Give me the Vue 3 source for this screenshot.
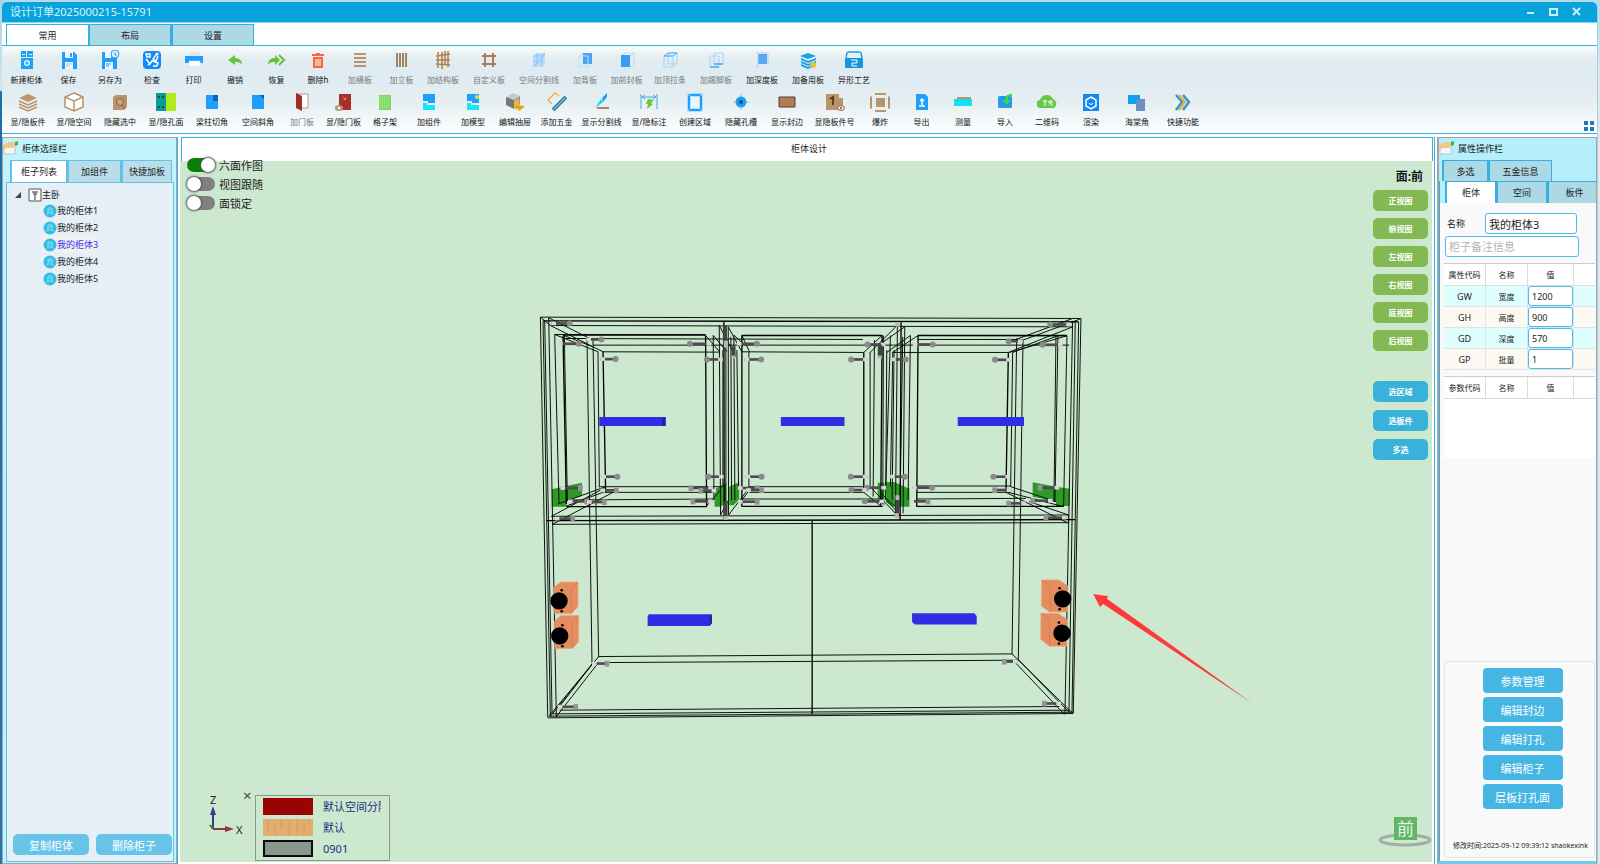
<script setup>
import { ref } from 'vue'

const ribbonTabs = ['常用', '布局', '设置']

const ribbonRows = [
  [
    { t: '新建柜体', i: '<path fill="#1aa3f5" d="M4 1h5v6H4zM10 1h6v6h-6zM4 8h12v11H4z"/><path fill="#e8f6ff" d="M5 4h3v1H5zM12 4h3v1h-3z"/><circle cx="10" cy="13" r="3" fill="#e8f6ff"/><path stroke="#1aa3f5" d="M10 11v4M8 13h4"/>' },
    { t: '保存', i: '<path fill="#1e9fff" d="M3 2h12l3 3v14H3z"/><path fill="#eef6fb" d="M6 2h8v6H6zM6 12h8v7H6z"/><path fill="#1e9fff" d="M11 3h2v4h-2z"/><path stroke="#bbb" d="M7 14h6M7 16h4"/>' },
    { t: '另存为', i: '<path fill="#1e9fff" d="M2 2h12l3 3v14H2z"/><path fill="#eef6fb" d="M5 2h6v6H5zM5 12h8v7H5z"/><circle cx="15" cy="4" r="4" fill="#dff1ff" stroke="#1e9fff"/><path stroke="#1e9fff" d="M15 2v3h2M6 14h5M6 16h3"/>' },
    { t: '检查', i: '<rect x="1" y="1" width="18" height="18" rx="4" fill="#0f8cf5"/><path fill="none" stroke="#fff" stroke-width="1.500" d="M4 4h4v3H5zM14 5l-3 4 3 2 2-5M4 9l4 5M6 15l2-1 2-3 6 2-1 3M11 16h4"/><circle cx="15" cy="4" r="1.500" fill="#fff"/>' },
    { t: '打印', i: '<path fill="#e3e5e7" d="M5 2h11v5H5z"/><path fill="#1e9fff" d="M1 6h18v7H1z"/><path fill="#fff" stroke="#dde" stroke-width=".5" d="M5 11h11v5H5z"/>' },
    { t: '撤销', i: '<path fill="#67c23a" d="M3 10l7-5v3c5 0 7 3 7 7-2-3-4-3-7-3v3z"/>' },
    { t: '恢复', i: '<path fill="#67c23a" d="M13 10L8 5v3c-5 0-7 3-7 7 2-3 4-3 7-3v3z"/><path fill="none" stroke="#67c23a" stroke-width="2" d="M12 5l5 5-5 5"/>' },
    { t: '删除h', i: '<path fill="#f5693a" d="M8 3h4v1h4v2H4V4h4zM5 7h10v11H5z"/><path stroke="#fff" d="M8 9v7M10 9v7M12 9v7"/>' },
    { t: '加横板', off: 1, i: '<path stroke="#b8946a" stroke-width="2" d="M4 4h12M4 8h12M4 12h12M4 16h12"/>' },
    { t: '加立板', off: 1, i: '<path stroke="#a08468" stroke-width="2" d="M5 3v14M8 3v14M11 3v14M14 3v14"/>' },
    { t: '加结构板', off: 1, i: '<path stroke="#b08050" stroke-width="1.500" d="M5 2v16M9 2v17M15 1v16M3 6l14-2M3 10h14M3 14l14 1M12 1v14"/>' },
    { t: '自定义板', off: 1, i: '<path stroke="#a88058" stroke-width="2" d="M6 3v14M14 3v14M3 6h14M3 14h14"/>' },
    { t: '空间分割线', off: 1, i: '<path fill="#b9dcfa" d="M4 6l4-3h8v11l-3 3H4z"/><path fill="none" stroke="#8cc4f5" d="M4 6h9v11M13 6l3-3M4 17L16 4M4 11h9M8 3v11"/>' },
    { t: '加背板', off: 1, i: '<path fill="#4aa3f2" d="M8 3h9v11H8z"/><path fill="none" stroke="#bfe0fb" d="M4 6h9v11H4zM4 6l4-3"/>' },
    { t: '加前封板', off: 1, i: '<path fill="none" stroke="#bfd9f2" d="M8 3h9v11l-4 3M4 6l4-3M13 6l4-3"/><path fill="#3a9df5" d="M4 5h9v12H4z"/>' },
    { t: '加顶拉条', off: 1, i: '<path fill="none" stroke="#a5d2f8" d="M8 3h9v11H8zM4 6h9v11H4z"/><path stroke="#4aa8f5" d="M4 6h9l4-3H8z" fill="none"/>' },
    { t: '加踢脚板', off: 1, i: '<path fill="none" stroke="#a5d2f8" d="M8 3h9v11H8zM4 6h9v11H4z"/><path stroke="#4aa8f5" stroke-width="1.500" d="M4 17h9M8 14h9"/>' },
    { t: '加深度板', i: '<path fill="#5ba7ee" d="M6 4h9v10H6z"/><path fill="none" stroke="#a9d3f8" d="M4 3h12M4 17h2V4M16 3v12"/>' },
    { t: '加备用板', i: '<path fill="#16a0ee" d="M10 3l8 3-8 3-8-3zM3 8l7 3 8-3v2l-8 3-7-3zM3 11l7 3 8-3v2l-8 3-7-3zM3 14l7 3 4-2v2l-4 2-7-3z"/><circle cx="15" cy="15" r="3" fill="#e8c03c"/>' },
    { t: '异形工艺', i: '<path fill="none" stroke="#1e9fe0" stroke-width="1.500" d="M2 8l1-5q0-1 2-1h10q2 0 2 1l1 5"/><rect x="1" y="8" width="18" height="10" rx="1" fill="#1496dd"/><path fill="none" stroke="#fff" d="M7 10h6v3H8v3h5"/>' }
  ],
  [
    { t: '显/隐板件', i: '<path fill="#c09868" d="M10 2l9 4-9 4-9-4z"/><path fill="none" stroke="#b8946a" stroke-width="1.500" d="M1 9l9 4 9-4M1 12l9 4 9-4M1 15l9 4 9-4"/>' },
    { t: '显/隐空间', i: '<path fill="#fff" stroke="#b8946a" stroke-width="1.500" d="M10 1l9 4v10l-9 4-9-4V5z"/><path fill="none" stroke="#b8946a" stroke-width="1.500" d="M1 5l9 4 9-4M10 9v10"/>' },
    { t: '隐藏选中', i: '<path fill="#b8946a" d="M3 5l3-2h11v12l-3 3H3z"/><circle cx="10" cy="10" r="3.500" fill="#c8a678" stroke="#8a6238"/><path stroke="#8a6238" d="M12 13l3 4"/>' },
    { t: '显/隐孔面', i: '<path fill="#0b9c96" d="M0 1h10v18H0z"/><path fill="#b3ea1c" d="M10 1h10v18H10z"/><path stroke="#064a4a" stroke-width="2" d="M3 4v2M3 14v2M7 4v2M7 14v2"/>' },
    { t: '梁柱切角', i: '<path fill="#1e9fff" d="M4 3h12v14H4z"/><path fill="#0668b8" d="M11 3h5v6h-5z"/>' },
    { t: '空间斜角', i: '<path fill="#1e9fff" d="M4 3h7l5 5v9H4z"/><path fill="#0668b8" d="M11 3h5v5z"/>' },
    { t: '加门板', off: 1, i: '<path fill="#fff" stroke="#c89088" d="M5 2h11v14H5z"/><path fill="#a02c24" d="M4 1l6 3v15l-6-3z"/>' },
    { t: '显/隐门板', i: '<path fill="#a83028" d="M5 2h12v16H5z"/><path stroke="#d8847c" d="M9 5l3 3M13 5l-3 3"/><ellipse cx="5" cy="16" rx="4" ry="3" fill="#b09070"/><circle cx="5" cy="16" r="1.500" fill="#eee"/>' },
    { t: '格子架', i: '<path fill="#7fd860" d="M4 3h12v15H4z"/><path stroke="#b4efa0" stroke-dasharray="1 1" d="M5 5h10M5 7h10M5 9h10M5 11h10M5 13h10M5 15h10"/>' },
    { t: '加组件', i: '<path fill="#1e9fff" d="M4 2h12v9H9V9H4z"/><path fill="#12e8f8" d="M4 11h4v2h8v5H4z"/>' },
    { t: '加模型', i: '<path fill="#1e9fff" d="M4 2h12v9H9V9H4z"/><path fill="#12e8f8" d="M4 11h4v2h8v5H4z"/><circle cx="14" cy="5" r="2" fill="#d8e838"/>' },
    { t: '编辑抽屉', i: '<path fill="#c8c8c8" d="M1 5l7-4 7 3-6 4z"/><path fill="#777" d="M1 5l8 3v9l-8-4z"/><path fill="#999" d="M9 8l6-4v9l-6 4z"/><path fill="#f0b82c" d="M9 9l5-2v5l5 3-4 4-6-3z"/><path stroke="#c8850c" fill="none" d="M10 14l5 2 4-2"/>' },
    { t: '添加五金', i: '<path fill="none" stroke="#f0b83c" stroke-width="1.500" d="M5 12l-4-4 7-7 4 3"/><path stroke="#3c88a8" stroke-width="4" d="M6 18L19 5"/><path stroke="#a0c8d8" d="M7 17L18 6"/>' },
    { t: '显示分割线', i: '<path fill="#1e9fff" d="M10 6l5-5v4l-4 5z"/><path fill="#18d8f0" d="M9 7l2 3-8 6z"/><path stroke="#b08060" stroke-width="2" d="M5 16h12"/>' },
    { t: '显/隐标注', i: '<path stroke="#40a8e0" fill="none" d="M2 2v15M18 2v15M3 5h14M6 3L3 5l3 2M14 3l3 2-3 2"/><path fill="#68c840" d="M9 7l6 1-3 3 2 1-6 5 1-5H7z"/>' },
    { t: '创建区域', i: '<rect x="4" y="3" width="12" height="15" fill="#e8f7ff" stroke="#1e9fff" stroke-width="2.500"/><path stroke="#8ee0ff" d="M3 2l3 3M17 2l-3 3M3 19l3-3M17 19l-3-3"/>' },
    { t: '隐藏孔槽', i: '<path stroke="#8adcf5" stroke-width="1.500" d="M10 2v16M2 10h16"/><circle cx="10" cy="10" r="5.500" fill="#1e9fe8"/><circle cx="10" cy="10" r="2" fill="#0a4888"/>' },
    { t: '显示封边', i: '<path fill="#b87858" stroke="#443" d="M2 5h16v10H2z"/>' },
    { t: '显隐板件号', i: '<path fill="#b8946a" d="M1 2h13v16H1zM14 6h4v10h-4z"/><path fill="none" stroke="#3a2a18" stroke-width="1.500" d="M5 7l3-2v8"/><ellipse cx="16" cy="16" rx="3.500" ry="2.500" fill="#f0e8dc" stroke="#8a6a48"/><circle cx="16" cy="16" r="1" fill="#6a4a28"/>' },
    { t: '爆炸', i: '<path fill="#b8946a" d="M6 6h9v9H6zM5 1h11v2H5zM5 18h11v2H5zM0 5l2-1v13l-2-1zM20 5l-2-1v13l2-1z"/>' },
    { t: '导出', i: '<path fill="#1e9fff" d="M4 2h9l3 3v13H4z"/><path stroke="#fff" stroke-width="1.500" fill="none" d="M10 13V7M8 9l2-2 2 2M7 14h6"/>' },
    { t: '测量', i: '<path fill="#b8946a" d="M4 5h14v5H4z"/><path fill="#12e4f4" d="M1 7h18v7H1z"/><path stroke="#0cc8dc" d="M4 7v3M7 7v2M10 7v3M13 7v2M16 7v3"/>' },
    { t: '导入', i: '<rect x="3" y="4" width="14" height="12" rx="1.500" fill="#2898e8"/><path fill="#38d850" d="M17 2c-5 0-7 2-7 6H7l5 5 4-5h-3c0-3 1-4 4-4z"/>' },
    { t: '二维码', i: '<path fill="#68c848" d="M4 16a4 4 0 01-1-8 7 7 0 0113-1 5 5 0 011 9z"/><path stroke="#fff" fill="none" d="M8 14V8M6 10l2-2 2 2M12 9h3v2h-3zM12 13h1M14 13h2"/>' },
    { t: '渲染', i: '<path fill="#0f88f8" d="M2 2h16v17H2z"/><path fill="none" stroke="#fff" stroke-width="1.500" d="M10 5l5 3v6l-5 3-5-3V8z"/><path fill="none" stroke="#fff" d="M8 11c1 2 3 2 4 0"/>' },
    { t: '海棠角', i: '<path fill="#12a0e8" d="M1 3h12v9H1z"/><path fill="#6890c0" d="M9 9l3-2h6v12H9z"/>' },
    { t: '快捷功能', i: '<path fill="none" stroke="#2c98dc" stroke-width="2.500" d="M3 3l6 7-6 8M10 3l6 7-6 8"/><path fill="none" stroke="#f0b030" stroke-width="2.500" d="M6 3l6 7-6 8"/>' }
  ]
]

const cabinets = ['我的柜体1', '我的柜体2', '我的柜体3', '我的柜体4', '我的柜体5']
const selected = ref('我的柜体3')
const name = ref('我的柜体3')
const toggles = ref([
  { t: '六面作图', on: true },
  { t: '视图跟随', on: false },
  { t: '面锁定', on: false }
])
const views = ['正视图', '俯视图', '左视图', '右视图', '底视图', '后视图']
const picks = ['选区域', '选板件', '多选']
const attrs = ref([
  { c: 'GW', n: '宽度', v: '1200' },
  { c: 'GH', n: '高度', v: '900' },
  { c: 'GD', n: '深度', v: '570' },
  { c: 'GP', n: '批量', v: '1' }
])
const actions = ['参数管理', '编辑封边', '编辑打孔', '编辑柜子', '层板打孔面']

// Edges of the cabinet, in thirds of a screen pixel
const thin = [
  'M32 51L54 1253M40 62L62 1250M45 62L67 1242M57 53L80 1253M32 51L1655 55M62 76L1630 80M32 51L62 76M57 53L190 120',
  'M1655 55L1632 1240M1648 65L1628 1240M1638 60L1619 1238M1630 62L1607 1243M1655 55L1630 66',
  'M90 1231L1590 1220M70 1242L1620 1231M60 1249L1632 1237M55 1254L1632 1241',
  'M207 1070L1448 1062M240 1088L1465 1081M57 1250L207 1070M80 1250L205 1090M85 1226L190 1090M62 1250L192 1086',
  'M1448 1062L1630 1240M1468 1080L1620 1238M1455 1085L1605 1243',
  'M172 115L187 1090M190 122L207 1072M1462 115L1448 1063M1481 120L1467 1080',
  'M65 649L1618 645M68 673L1618 668M65 649L228 562M68 673L250 577M85 612L228 560M110 618L225 575',
  'M62 76L220 155M75 103L205 155M100 105L190 140M75 103H528M100 115L1000 118M190 135L1620 135M220 155L570 156',
  'M75 103L88 612M104 107L113 600M205 155L209 562M551 106L553 600M113 600L555 597M209 560H580M225 577H550',
  'M569 76L573 645M596 80L597 645M580 150V560M589 80V640M604 110L606 600M613 105L616 600M622 150L627 560M658 155V560',
  'M528 106L570 155M551 106L592 155M569 76L618 170M596 80L637 155M637 106L660 155M613 105L640 130M531 618L573 570M573 645L597 600M597 645L660 562M637 600L660 570',
  'M637 106H1058M637 155L1003 157M658 560H1003M660 577H1003M637 597H1055',
  'M1022 156V562M1035 120L1031 590M1062 106L1060 612M1083 106L1068 600M1072 150L1069 560M1090 155L1083 560M1104 75L1098 645M1126 80L1121 640M1143 106L1136 600M1094 150L1088 600M1120 110L1112 600',
  'M1058 106L1003 157M1104 75L1022 157M1126 80L1055 130M1143 106L1072 157M1166 106L1090 157M1003 577L1054 618M1022 560L1098 640M1070 600L1112 645M1054 580L1098 620',
  'M1166 118H1480M1166 106L1613 107M1090 157H1437M1450 157L1444 560M1586 107L1577 605M1613 107L1603 618M1580 107L1574 605',
  'M1162 597L1490 595M1162 577H1430M1162 558H1444M1630 55L1460 118M1630 80L1437 157M1586 107L1450 157M1613 107L1440 157M1630 65L1481 120',
  'M1430 575L1603 620M1444 560L1580 605M1430 577L1618 670M1500 605L1618 645M1618 645V668'
].join('')
const bold = [
  'M40 62L1648 65M50 662L1637 659M583 62L584 660M1115 65L1112 660M848 662V1243',
  'M100 107L110 612M528 106L531 620M220 155L228 577M637 106V620M1003 157V577M1058 106L1054 618M1166 106L1162 620M1437 157L1430 575',
  'M100 105H528M110 620H531M637 619H1060M1162 619H1603M637 106H1058M1166 106H1613'
].join('')

// [x, y, length, direction]
const pins = [
  [65, 70, 55, 1], [170, 118, 45, 1], [85, 131, 62, 1], [212, 177, 46, 1], [215, 530, 48, 1],
  [545, 131, 64, -1], [580, 178, 48, -1], [582, 530, 46, -1], [622, 131, 60, 1], [645, 178, 50, 1], [648, 530, 48, 1],
  [92, 564, 60, 1], [115, 604, 56, 1], [172, 606, 52, 1], [212, 571, 48, 1], [75, 656, 54, 1],
  [550, 564, 66, -1], [550, 604, 60, -1], [560, 572, 46, -1], [625, 564, 58, 1], [625, 605, 58, 1], [650, 570, 46, 1],
  [1068, 133, 54, -1], [1015, 178, 50, -1], [1085, 178, 44, 1], [1150, 133, 60, 1],
  [1445, 179, 48, -1], [1600, 134, 60, -1], [1480, 123, 42, -1], [1625, 73, 62, -1],
  [1014, 530, 50, -1], [1082, 530, 44, 1], [1442, 530, 50, -1],
  [1070, 563, 58, -1], [1064, 604, 58, -1], [1012, 570, 46, -1], [1148, 563, 60, 1], [1140, 604, 56, 1],
  [1446, 570, 50, -1], [1590, 563, 58, -1], [1570, 602, 60, -1], [1490, 610, 52, -1], [1612, 653, 62, -1],
  [187, 1091, 45, 1], [84, 1221, 54, 1], [1465, 1085, 40, -1], [1595, 1211, 50, -1]
]
const speakers = [
  { p: 'M72 862L94 846H145V920L126 941H74Z', e: 'M124 866L145 847M124 866L126 940', x: 88, y: 903, h: 96 },
  { p: 'M74 964L94 947H147V1026L128 1046H76Z', e: 'M126 966L147 948M126 966L128 1045', x: 90, y: 1008, h: 98 },
  { p: 'M1537 840H1588L1615 857V936H1560L1536 918Z', e: 'M1537 841L1562 858L1563 935', x: 1600, y: 897, h: 1591 },
  { p: 'M1535 940H1586L1613 958V1039H1560L1534 1018Z', e: 'M1535 941L1560 958L1561 1038', x: 1598, y: 1000, h: 1589 }
]
</script>

<template>
  <div class="desktop">
    <div class="window">
      <header class="titlebar">
        <h1>设计订单2025000215-15791</h1>
        <div class="winbtns">
          <button aria-label="最小化"><svg width="10" height="10"><path d="M1 6h7" /></svg></button>
          <button aria-label="最大化"><svg width="10" height="10"><path d="M1 2h7v6H1z" /></svg></button>
          <button aria-label="关闭"><svg width="10" height="10"><path d="M1 1l7 7M8 1L1 8" /></svg></button>
        </div>
      </header>

      <nav class="tabs menu">
        <button v-for="(t, k) in ribbonTabs" :key="t" :class="{ active: k === 0 }">{{ t }}</button>
      </nav>

      <section class="ribbon">
        <div v-for="(row, r) in ribbonRows" :key="r" class="tools" :class="'tools-' + r">
          <button v-for="b in row" :key="b.t" :disabled="!!b.off">
            <svg viewBox="0 0 20 20" v-html="b.i" />
            <span>{{ b.t }}</span>
          </button>
        </div>
        <button class="grid-btn" aria-label="布局"><svg width="10" height="10"><path fill="#2577b3" d="M0 0h4v4H0zM6 0h4v4H6zM0 6h4v4H0zM6 6h4v4H6z" /></svg></button>
      </section>

      <main>
        <aside class="panel left">
          <h2>
            <svg width="16" height="16" viewBox="0 0 16 16"><path fill="#f4f8fa" stroke="#b8c8d0" d="M1 7h11v7H1z" /><path fill="#eec98a" d="M0 5l6-3 6 0 2 3-6 3-4 0-4 2z" /><path fill="#38b838" d="M12 2l3-1v4l-3 1z" /></svg>
            柜体选择栏
          </h2>
          <nav class="tabs">
            <button class="active">柜子列表</button><button>加组件</button><button>快捷加板</button>
          </nav>
          <div class="pane">
            <div class="root">
              <svg class="caret" width="6" height="6"><path fill="#444" d="M6 0v6H0z" /></svg>
              <svg width="14" height="14" viewBox="0 0 14 14"><path fill="#fff" stroke="#555" d="M1 1h12v12H1z" /><path fill="none" stroke="#777" d="M4 4h6M5 6h4M7 4v8" stroke-width="1.500" /></svg>
              主卧
            </div>
            <ul>
              <li v-for="c in cabinets" :key="c">
                <button :class="{ sel: c === selected }" @click="selected = c">
                  <svg width="14" height="14" viewBox="0 0 14 14"><circle cx="7" cy="7" r="6.500" fill="#32bce6" /><path fill="none" stroke="#8adcf2" d="M5 4h4v5H5zM5 6h4M3 11l2-2M11 11L9 9" /></svg>{{ c }}
                </button>
              </li>
            </ul>
            <div class="foot"><button>复制柜体</button><button>删除柜子</button></div>
          </div>
        </aside>

        <section class="center">
          <h2>柜体设计</h2>
          <div class="canvas">
            <svg class="scene" viewBox="-1050 -417 3759 2103" role="img" aria-label="柜体三维视图">
              <path fill="#2e9a26" d="M66 568L110 558L157 548V588L110 602V620H66ZM555 568L590 548V610L572 620H555ZM599 560L629 546V598L612 616H599ZM1045 548H1065V618L1045 596ZM1070 546H1094L1140 566V620H1090L1070 606ZM1510 547L1580 560L1621 566V618H1580V604L1510 590Z" />
              <path class="edge" :d="thin" />
              <path class="edge strong" :d="bold" />
              <g fill="#2e2ee4">
                <path d="M209 351H408V378H209ZM754 351H945V378H754ZM1285 351H1484V378H1285Z" />
                <path d="M358 943H547V970L541 978H354V949ZM1148 940H1335L1342 948V974H1156L1148 966Z" />
              </g>
              <path fill="#23239c" d="M397 353h11v24h-11zM540 945l7 0v24l-7 7z" />
              <g v-for="(p, k) in pins" :key="k">
                <path :d="`M${p[0]} ${p[1]}h${p[2] * p[3]}`" stroke="#4c4c4c" stroke-width="8" />
                <path :d="`M${p[0]} ${p[1]}h${14 * p[3]}`" stroke="#ddd5dd" stroke-width="11" />
                <rect v-if="k > 10 && k < 22 || k > 36" :x="p[0] + p[2] * p[3] - 7" :y="p[1] - 8" width="14" height="17" fill="#969096" />
                <circle v-else :cx="p[0] + p[2] * p[3]" :cy="p[1]" r="9" fill="#8c888c" />
              </g>
              <path stroke="#444" stroke-width="12" d="M586 75v44M588 605v42M612 138v32M1051 133v36M1104 600v40" />
              <path stroke="#bbb4bb" stroke-width="12" d="M589 122v20M588 648v12M612 166v10M1051 166v10M1104 68v12M1104 586v14M1102 640v14" />
              <g v-for="s in speakers" :key="s.y">
                <path :d="s.p" fill="#e58d5e" stroke="#f2a478" stroke-width="2" />
                <path :d="s.e" fill="none" stroke="#c87850" stroke-width="2" />
                <circle :cx="s.x" :cy="s.y" r="26" /><circle :cx="s.h" :cy="s.y - 32" r="4" /><circle :cx="s.h" :cy="s.y + 31" r="4" />
              </g>
              <path fill="#ff3838" d="M1692 882L1737 889L1732 896L2170 1211L1722 912L1712 921Z" />
            </svg>

            <div class="toggles">
              <label v-for="t in toggles" :key="t.t"><input v-model="t.on" type="checkbox">{{ t.t }}</label>
            </div>

            <div class="viewbar">
              <strong>面:前</strong>
              <div class="group"><button v-for="v in views" :key="v">{{ v }}</button></div>
              <div class="group pick"><button v-for="v in picks" :key="v">{{ v }}</button></div>
            </div>

            <svg class="axis" width="50" height="50" viewBox="0 0 50 50">
              <path stroke="#3a3a8c" stroke-width="2" d="M16 36V18" /><path fill="#3a3a8c" d="M13 22L16 13L19 22Z" />
              <path stroke="#8c3a3a" stroke-width="2" d="M16 36H30" /><path fill="#8c3a3a" d="M28 33L37 36L28 39Z" />
              <path stroke="#2f8040" fill="none" stroke-width="2" d="M13 32L16 36" />
              <text x="13" y="11">Z</text><text x="39" y="41">X</text>
            </svg>

            <div class="legend">
              <button aria-label="关闭图例">×</button>
              <ul>
                <li>
                  <svg width="50" height="17"><path fill="#9c0404" d="M0 0h50v17H0z" /><path stroke="#7c0808" fill="none" d="M3 4l8 3M14 10l9-3M27 4l9 4M31 13l12-4M8 14l7-2" /></svg>
                  <span>默认空间分隔</span>
                </li>
                <li>
                  <svg width="50" height="17"><path fill="#e2ad70" d="M0 0h50v17H0z" /><path stroke="#d49c5c" d="M5 0v12M12 3v14M18 0v9M26 2v15M34 0v14M41 4v13M46 0v8" /></svg>
                  <span>默认</span>
                </li>
                <li>
                  <svg width="50" height="17"><path fill="#8a978c" stroke="#0c0c0c" stroke-width="2" d="M1 1h48v15H1z" /></svg>
                  <span>0901</span>
                </li>
              </ul>
            </div>

            <svg class="compass" width="54" height="32" viewBox="0 0 54 32">
              <ellipse cx="27" cy="24" rx="25" ry="5" fill="none" stroke="#a4aca5" stroke-width="3" />
              <path fill="#62b466" d="M16 1h23v23H16z" /><text x="19" y="19">前</text>
            </svg>
          </div>
        </section>

        <aside class="panel right">
          <h2>
            <svg width="16" height="16" viewBox="0 0 16 16"><path fill="#f4f8fa" stroke="#b8c8d0" d="M1 7h11v7H1z" /><path fill="#eec98a" d="M0 5l6-3 6 0 2 3-6 3-4 0-4 2z" /><path fill="#38b838" d="M12 2l3-1v4l-3 1z" /></svg>
            属性操作栏
          </h2>
          <nav class="tabs upper"><button>多选</button><button>五金信息</button></nav>
          <nav class="tabs lower"><button class="active">柜体</button><button>空间</button><button>板件</button></nav>
          <div class="pane">
            <div class="field"><label for="cab-name">名称</label><input id="cab-name" v-model="name"></div>
            <input class="remark" placeholder="柜子备注信息" aria-label="柜子备注信息">
            <table>
              <thead><tr><th>属性代码</th><th>名称</th><th>值</th><th></th></tr></thead>
              <tbody>
                <tr v-for="a in attrs" :key="a.c">
                  <td class="code">{{ a.c }}</td><td>{{ a.n }}</td><td class="val"><input v-model="a.v" :aria-label="a.n"></td><td></td>
                </tr>
              </tbody>
            </table>
            <div class="params">
              <table><thead><tr><th>参数代码</th><th>名称</th><th>值</th><th></th></tr></thead></table>
            </div>
            <div class="actions">
              <button v-for="a in actions" :key="a">{{ a }}</button>
              <p>修改时间:2025-09-12 09:39:12 shaokexink</p>
            </div>
          </div>
        </aside>
      </main>
    </div>
  </div>
</template>

<style>
body { margin: 0; }
</style>

<style scoped>
* { box-sizing: border-box; }
.desktop {
  min-height: 100vh;
  display: flex;
  padding: 2px 2px 0;
  background: linear-gradient(#a9d5e6 0, #c3dfec 60px, #dde3e8 90px, #1f6ea8 92px, #2474ac 100%) left / 4px 100% no-repeat, linear-gradient(#b5dae8, #e4e6e8 80px);
  font-family: "Noto Sans", "Noto Sans CJK SC", sans-serif;
  font-size: 9px;
  color: #222;
}
h1, h2, ul, p { margin: 0; padding: 0; font-weight: 400; list-style: none; }
button, input { font: inherit; color: inherit; margin: 0; }
button { border: 0; background: none; padding: 0; white-space: nowrap; cursor: pointer; }
svg { display: block; flex: none; }

.window {
  flex: 1;
  min-width: 0;
  display: flex;
  flex-direction: column;
  background: #fff;
  border-right: 1px solid #9bd3ea;
  border-radius: 5px 5px 0 0;
}
.titlebar {
  height: 21px;
  display: flex;
  align-items: center;
  justify-content: space-between;
  padding: 0 15px 0 8px;
  background: #09a3dc;
  border-bottom: 1px solid #8fd4ee;
  border-radius: 5px 5px 0 0;
  color: #d9f3fc;
}
h1 { font-size: 11px; line-height: 20px; }
.winbtns { display: flex; gap: 13px; }
.winbtns svg { fill: none; stroke: #c9effb; stroke-width: 2; }

.tabs { display: flex; }
.tabs button {
  flex: none;
  height: 22px;
  border: 1px solid #35b0df;
  border-left-width: 2px;
  border-bottom: 0;
  background: #add8e6;
}
.tabs .active { background: #fff; }
.menu { padding: 1px 0 0 4px; }
.menu button { width: 83px; height: 21px; }
.menu .active { width: 82px; height: 22px; margin-bottom: -1px; position: relative; border-left-width: 1px; border-right: 0; }

.ribbon {
  position: relative;
  display: flex;
  flex-direction: column;
  gap: 6px;
  padding: 4px 0 5px 3px;
  border: 1px solid #35b0df;
  border-width: 1px 0;
  background: linear-gradient(#fafcfc 0, #e4edf0 12px, #deebf2 24px, #e5eef1 55px, #fdfeff 100%);
}
.tools { display: grid; height: 36px; }
.tools-0 { grid-template-columns: 43px 41px 42px 42px 41px 42px 41px 42px 42px 41px 42px 50px 50px 42px 41px repeat(5, 46px); }
.tools-1 { grid-template-columns: repeat(6, 46px) 42px 41px 42px 46px 42px 42px 41px 49px repeat(4, 46px) 49px 42px 41px 42px 42px 42px repeat(3, 46px); }
.tools button { display: flex; flex-direction: column; align-items: center; gap: 4px; font-size: 8px; line-height: 12px; color: #111; }
.tools button:disabled { color: #777; }
.tools svg { width: 20px; height: 20px; fill: none; }
.grid-btn { position: absolute; right: 3px; bottom: 2px; }

main { flex: 1; display: flex; min-height: 0; padding-top: 3px; }
.panel {
  flex: none;
  display: flex;
  flex-direction: column;
  border: 1px solid #a4a4a4;
  overflow: hidden;
}
.panel h2 { height: 22px; display: flex; align-items: center; gap: 3px; padding-bottom: 1px; font-size: 9px; }
.panel h2 svg { align-self: flex-start; margin-top: 2px; }
.left { width: 175px; background: #c2f3fc; }
.left .tabs { padding-left: 7px; }
.left .tabs button { border-color: #5fc3e8; background: #b9dde9; width: 54px; }
.left .tabs button:first-child { width: 57px; background: #fff; }
.left .tabs button:last-child { width: 51px; }
.pane { flex: 1; display: flex; flex-direction: column; }
.left .pane { margin: 0 2px 1px 3px; border: 1px solid #5bc3ea; background: #e6eef6; padding-top: 3px; }
.root { display: flex; align-items: center; height: 17px; padding-left: 8px; }
.caret { margin-right: 7px; }
.left ul { margin-top: -1px; }
.left li { height: 17px; padding-left: 35px; }
.left li button { display: flex; align-items: center; height: 17px; padding: 0 1px 0 1px; }
.left li .sel { background: #f0f0f0; color: #3c2cf0; }
.foot { margin-top: auto; display: flex; gap: 7px; padding: 0 1px 6px 6px; }
.foot button { flex: 1; height: 21px; border-radius: 5px; background: #67c3e8; color: #fff; font-size: 11px; }

.center { flex: 1; min-width: 0; display: flex; flex-direction: column; margin-right: 2px; border: 1px solid #35b0df; border-width: 0 1px; padding: 0 2px 2px; }
.center h2 { height: 24px; line-height: 21px; font-size: 9px; text-align: center; border: 1px solid #35b0df; border-bottom: 0; margin: 0 -1px 0 1px; padding-left: 4px; }
.canvas { position: relative; flex: 1; min-height: 600px; background: #cce8cf; }
.scene { position: absolute; inset: 0; width: 100%; height: 100%; }
.edge { fill: none; stroke: #0c120e; stroke-width: 3; }
.strong { stroke: #000; stroke-width: 4; }

.toggles { position: absolute; left: 7px; top: -6px; }
.toggles label { display: flex; align-items: center; gap: 4px; height: 19px; font-size: 11px; }
.toggles input {
  appearance: none;
  width: 28px;
  height: 14px;
  border-radius: 7px;
  background: #808080;
  display: flex;
}
.toggles input::before { content: ""; width: 14px; height: 14px; border-radius: 50%; background: #fff; box-shadow: 0 0 2px 1px #555; }
.toggles input:checked { background: #0a800a; justify-content: flex-end; }

.viewbar { position: absolute; right: 4px; top: 7px; display: flex; flex-direction: column; align-items: flex-end; }
.viewbar strong { font-size: 12px; line-height: 18px; margin: 0 5px 4px 0; color: #111; }
.group { display: flex; flex-direction: column; gap: 7px; }
.group button { width: 55px; height: 21px; border-radius: 5px; background: #83b953; color: #fff; font-size: 8px; font-weight: 700; }
.pick { margin-top: 30px; gap: 8px; }
.pick button { background: #38b2db; }

.axis { position: absolute; left: 17px; bottom: 19px; font-size: 11px; fill: #222; }
.legend { position: absolute; left: 75px; bottom: 1px; width: 135px; height: 66px; border: 1px solid #8a968e; padding: 2px 8px 0 7px; }
.legend button { position: absolute; left: -13px; top: -9px; font-size: 15px; line-height: 16px; color: #444; }
.legend ul { display: flex; flex-direction: column; gap: 4px; }
.legend li { display: flex; gap: 10px; height: 17px; line-height: 17px; font-size: 11px; color: #1c2f7c; }
.legend span { width: 58px; overflow: hidden; white-space: nowrap; }
.compass { position: absolute; right: 0; bottom: 14px; font-size: 17px; fill: #e8f5e8; }

.right { width: 160px; background: #b5effb; border-left-width: 2px; border-bottom: 3px solid #6fcbea; }
.right .upper { padding-left: 3px; }
.right .upper button { width: 46px; height: 21px; }
.right .upper button:last-child { width: 64px; }
.right .lower { padding-left: 6px; background: linear-gradient(#35b0df, #35b0df) left / 1px no-repeat; }
.right .lower button { width: 51px; }
.right .lower button:last-child { width: 54px; }
.right .pane { border-left: 1px solid #35b0df; background: #f9f9f9; padding: 10px 1px 3px 4px; }
.field { display: flex; align-items: center; gap: 20px; padding-left: 3px; }
.field input, .remark, .val input { border: 1px solid #4fbae3; border-radius: 3px; background: #fff; outline: 0; padding: 0 3px; min-width: 0; }
.field input { width: 92px; height: 21px; font-size: 11px; }
.remark { width: 134px; height: 21px; margin: 2px 0 6px 1px; font-size: 11px; }
.remark::placeholder { color: #b4b4b4; }
table { width: 100%; table-layout: fixed; border-collapse: separate; border-spacing: 0; font-size: 8px; background: #fff; border-top: 1px solid #ccc; }
th, td { padding: 0; height: 21px; font-weight: 400; text-align: center; border-right: 1px solid #dde4ee; border-bottom: 1px solid #dde4ee; }
th { height: 22px; border-color: #ddd; width: 42px; }
th:nth-child(3) { width: 46px; }
th:last-child { width: auto; }
th:last-child, td:last-child { border-right: 0; }
tbody tr { background: #dffffe; }
tbody tr:nth-child(even) { background: #fbf9f2; }
.code { font-size: 9px; }
.val input { display: block; width: 45px; height: 20px; font-size: 9px; }
.params { height: 82px; margin-top: 6px; background: #fff; }
.actions { margin-top: auto; height: 197px; border: 1px solid #dfe8ee; border-radius: 3px; display: flex; flex-direction: column; align-items: center; gap: 4px; padding: 6px 0 0 6px; }
.actions button { width: 80px; height: 25px; flex: none; border-radius: 4px; background: #45b6e3; color: #fff; font-size: 11px; }
.actions p { margin: auto 4px 0 0; padding-bottom: 6px; font-size: 7px; line-height: 10px; white-space: nowrap; }
</style>
